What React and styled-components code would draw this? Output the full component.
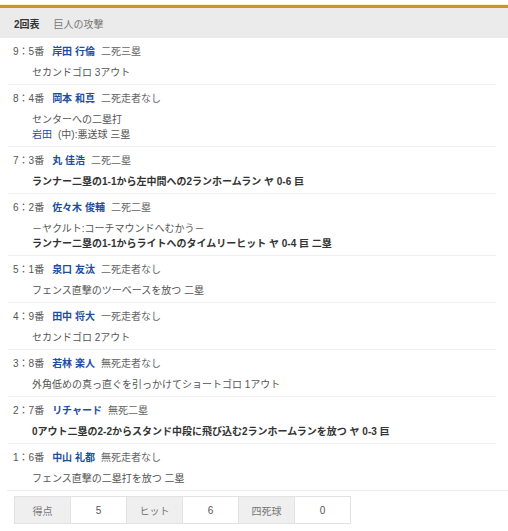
import React from 'react';
import styled, { createGlobalStyle } from 'styled-components';

const GlobalStyle = createGlobalStyle`
  body {
    margin: 0;
    background: #ffffff;
    font-family: "Liberation Sans", "Noto Sans CJK JP", sans-serif;
    font-size: 10px;
    color: #555;
  }
`;

const Page = styled.div`
  width: 508px;
  padding-top: 4px;
`;

const TopBar = styled.div`
  height: 3px;
  border-top: 1px solid #fbf0c6;
  background: #d98d2b;
`;

const InningHeader = styled.div`
  display: flex;
  align-items: center;
  gap: 14px;
  height: 30px;
  padding-left: 14px;
  background: #ebebeb;
`;

const InningNo = styled.span`
  font-weight: bold;
  color: #333;
`;

const InningTitle = styled.span`
  color: #777;
`;

const List = styled.ul`
  list-style: none;
  margin: 0 12px 0 8px;
  padding: 0;
`;

const Row = styled.li`
  padding: 6px 0 4px 5px;
  border-bottom: ${(p) => (p.$last ? 'none' : '1px solid #f0f0f0')};
`;

const Batter = styled.div`
  line-height: 16px;
  color: #555;
`;

const Name = styled.span`
  margin: 0 6px 0 8px;
  font-weight: bold;
  color: #1d4f9e;
`;

const Situation = styled.span`
  color: #666;
`;

const Details = styled.div`
  margin-top: 5px;
  padding-left: 19px;
`;

const Line = styled.div`
  line-height: 15px;
  color: ${(p) => (p.$bold ? '#333' : '#555')};
  font-weight: ${(p) => (p.$bold ? 'bold' : 'normal')};
  white-space: nowrap;
`;

const Runner = styled.span`
  margin-right: 6px;
  color: #1d4f9e;
`;

const Summary = styled.div`
  margin-left: 7px;
  padding: 5px 0 0 7px;
  border-top: 1px solid #ececec;
`;

const Stats = styled.table`
  border-collapse: collapse;
  font-size: 10px;
`;

const Cell = styled.td`
  width: 55px;
  height: 26px;
  padding: 0;
  text-align: center;
  border: 1px solid #e2e2e2;
  background: ${(p) => (p.$label ? '#efefef' : '#ffffff')};
  color: ${(p) => (p.$label ? '#777' : '#555')};
`;

const plays = [
  { no: 9, order: 5, name: '岸田 行倫', sit: '二死三塁', lines: [{ t: 'セカンドゴロ 3アウト' }] },
  {
    no: 8, order: 4, name: '岡本 和真', sit: '二死走者なし',
    lines: [{ t: 'センターへの二塁打' }, { runner: '岩田', t: '(中):悪送球 三塁' }],
  },
  { no: 7, order: 3, name: '丸 佳浩', sit: '二死二塁', lines: [{ t: 'ランナー二塁の1-1から左中間への2ランホームラン ヤ 0-6 巨', bold: true }] },
  {
    no: 6, order: 2, name: '佐々木 俊輔', sit: '二死二塁',
    lines: [
      { t: '－ヤクルト:コーチマウンドへむかう－' },
      { t: 'ランナー二塁の1-1からライトへのタイムリーヒット ヤ 0-4 巨 二塁', bold: true },
    ],
  },
  { no: 5, order: 1, name: '泉口 友汰', sit: '二死走者なし', lines: [{ t: 'フェンス直撃のツーベースを放つ 二塁' }] },
  { no: 4, order: 9, name: '田中 将大', sit: '一死走者なし', lines: [{ t: 'セカンドゴロ 2アウト' }] },
  { no: 3, order: 8, name: '若林 楽人', sit: '無死走者なし', lines: [{ t: '外角低めの真っ直ぐを引っかけてショートゴロ 1アウト' }] },
  { no: 2, order: 7, name: 'リチャード', sit: '無死二塁', lines: [{ t: '0アウト二塁の2-2からスタンド中段に飛び込む2ランホームランを放つ ヤ 0-3 巨', bold: true }] },
  { no: 1, order: 6, name: '中山 礼都', sit: '無死走者なし', lines: [{ t: 'フェンス直撃の二塁打を放つ 二塁' }] },
];

const App = () => (
  <>
    <GlobalStyle />
    <Page>
      <TopBar />
      <InningHeader>
        <InningNo>2回表</InningNo>
        <InningTitle>巨人の攻撃</InningTitle>
      </InningHeader>

      <List>
        {plays.map((p, i) => (
          <Row key={p.no} $last={i === plays.length - 1}>
            <Batter>
              {p.no}：{p.order}番
              <Name>{p.name}</Name>
              <Situation>{p.sit}</Situation>
            </Batter>
            <Details>
              {p.lines.map((l, j) => (
                <Line key={j} $bold={l.bold}>
                  {l.runner && <Runner>{l.runner}</Runner>}
                  {l.t}
                </Line>
              ))}
            </Details>
          </Row>
        ))}
      </List>

      <Summary>
        <Stats>
          <tbody>
            <tr>
              <Cell $label>得点</Cell>
              <Cell>5</Cell>
              <Cell $label>ヒット</Cell>
              <Cell>6</Cell>
              <Cell $label>四死球</Cell>
              <Cell>0</Cell>
            </tr>
          </tbody>
        </Stats>
      </Summary>
    </Page>
  </>
);

export default App;
